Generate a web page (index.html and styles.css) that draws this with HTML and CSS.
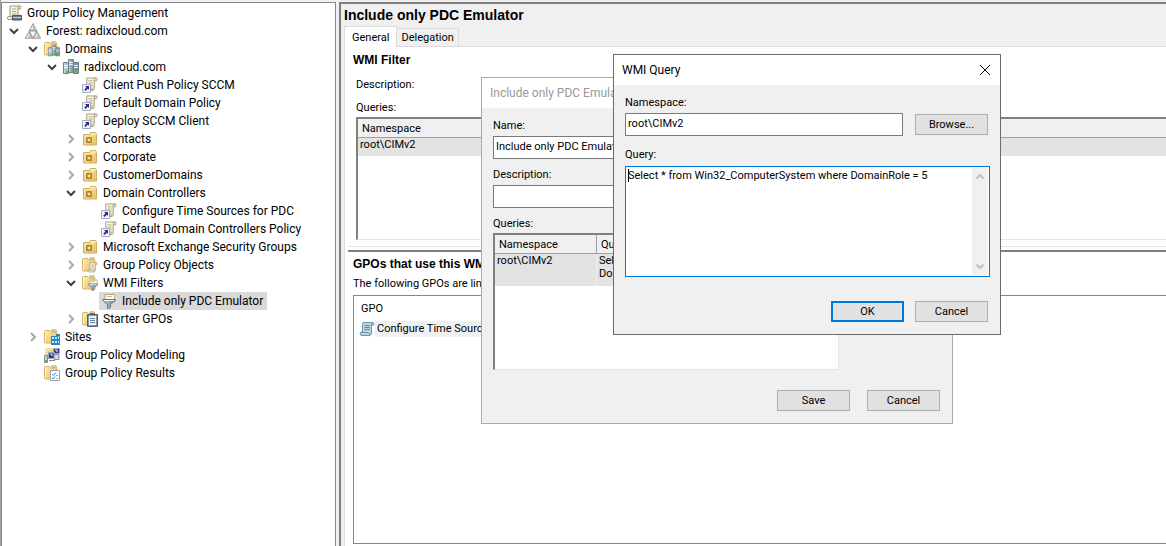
FILE: index.html
```html
<!DOCTYPE html>
<html lang="en">
<head>
  <meta charset="UTF-8">
  <meta name="viewport" content="width=device-width, initial-scale=1.0">
  <title>Group Policy Management</title>
  <link rel="stylesheet" href="styles.css">
</head>
<body>

  <!-- ICONS -->
  <svg class="icon-defs" aria-hidden="true">
    <defs>
      <linearGradient id="paper" x1="0" y1="0" x2="1" y2="1"><stop offset="0" stop-color="#fffdf0"/><stop offset="1" stop-color="#e3dbb9"/></linearGradient>
      <linearGradient id="gold" x1="0" y1="0" x2="1" y2="1"><stop offset="0" stop-color="#fdebb0"/><stop offset="1" stop-color="#e9bf5b"/></linearGradient>
      <linearGradient id="steel" x1="0" y1="0" x2="1" y2="0"><stop offset="0" stop-color="#c4d3dc"/><stop offset="1" stop-color="#6c8494"/></linearGradient>
    </defs>
    <symbol id="scroll" viewBox="0 0 16 16">
      <path d="M4 1h10.500q1 1 0 3H12v8q0 2-1.500 2.500H2q-1.500-1.500 0-3h2z" fill="url(#paper)" stroke="#a39b80"/>
      <path d="M12 4V2q.5-1 2-1M2 11.500h7q1 1 1 3" fill="none" stroke="#a39b80"/>
      <path d="M6 4h4M6 6.500h4M6 9h4" stroke="#b9ad84"/>
    </symbol>
    <symbol id="gpm" viewBox="0 0 16 16">
      <use href="#scroll"/>
      <path d="M6.500 10.500h9v4.500h-9z" fill="#66798a" stroke="#475866"/>
      <path d="M9 10V8.500h4V10M7 12.500h8" fill="none" stroke="#c8d1d8"/>
    </symbol>
    <symbol id="forest" viewBox="0 0 16 16">
      <path d="M8 .5L11.700 7.500H4.300zM4 8.300L7.700 15.300H.3zM12 8.300l3.700 7H8.300z" fill="#e4e4e4" stroke="#8a8a8a" stroke-width=".8"/>
      <path d="M4.300 8h7.400L8 15z" fill="#f6f6f6" stroke="#8a8a8a" stroke-width=".8"/>
      <path d="M8 2v5.300h2.800zM4 10v5h2.800zM12 10v5h2.800z" fill="#bcbcbc"/>
    </symbol>
    <symbol id="folder" viewBox="0 0 16 16">
      <path d="M.5 2.500q0-1 1-1h4l1 1.500h5.500q1 0 1 1v10H1.500q-1 0-1-1z" fill="url(#gold)" stroke="#d3b46c"/>
      <path d="M7.500.7H12l.8 1.800H8z" fill="#e8d7a0" stroke="#c9a75a" stroke-width=".7"/>
      <path d="M1.500 3v10" stroke="#fff3c8"/>
    </symbol>
    <symbol id="servers" viewBox="0 0 16 16">
      <path d="M5.500.5h5v13h-5z" fill="url(#steel)" stroke="#6d808d"/>
      <path d="M.5 3.500h5v11h-5zM10.500 3.500h5v11h-5z" fill="url(#steel)" stroke="#6d808d"/>
      <path d="M6 3.500h4M6 5.500h4M1 6.500h4M1 8.500h4M11 6.500h4M11 8.500h4" stroke="#edf3f6"/>
      <path d="M3 12h2v2H3zM13 12h2v2h-2zM8 10h2v2H8z" fill="#52cf28"/>
    </symbol>
    <symbol id="domains" viewBox="0 0 16 16">
      <use href="#folder"/>
      <use href="#servers" x="4" y="4" width="12" height="12"/>
    </symbol>
    <symbol id="link" viewBox="0 0 16 16">
      <use href="#scroll" x="1" y="0" width="15" height="15"/>
      <path d="M.5 7.500h8v8h-8z" fill="#f4f5fb" stroke="#a7a9b8"/>
      <path d="M3 9h4v4L5.800 11.800 3.500 14 2.200 12.700l2.200-2.200z" fill="#292d83"/>
    </symbol>
    <symbol id="ou" viewBox="0 0 16 16">
      <path d="M1.500 3.500h6l1-2h5l1 2v10.500h-13z" fill="url(#gold)" stroke="#cfae5e"/>
      <path d="M9 3h4.500" stroke="#fff"/>
      <path d="M4.500 6.500h5v5h-5z" fill="#c3a142" stroke="#a08434"/>
      <path d="M6 8h2v2H6z" fill="#f4e4a1"/>
    </symbol>
    <symbol id="gpos" viewBox="0 0 16 16">
      <use href="#folder"/>
      <use href="#scroll" x="5" y="5" width="11" height="11"/>
    </symbol>
    <symbol id="funnel" viewBox="0 0 16 16">
      <path d="M4 1.500h9.500q1 1 0 2V7H4z" fill="#fffdf0" stroke="#b1a57d"/>
      <path d="M6 3.500h5" stroke="#c9bc93"/>
      <path d="M1.500 6.500h13q0 2-5 4.500v3.500l-3 1V11q-5-2.500-5-4.500z" fill="url(#steel)" stroke="#647f92"/>
      <path d="M3 7.500h10" stroke="#eff6fa"/>
    </symbol>
    <symbol id="wmi" viewBox="0 0 16 16">
      <use href="#folder"/>
      <use href="#funnel" x="5" y="4" width="12" height="12"/>
    </symbol>
    <symbol id="starter" viewBox="0 0 16 16">
      <use href="#folder"/>
      <path d="M5.500 3.500h10v12h-10z" fill="#7f98ad" stroke="#4c6478"/>
      <path d="M7 5h7v9H7z" fill="#eef3f7"/>
      <path d="M8 7.500h5M8 9.500h5M8 11.500h5" stroke="#6886a4"/>
      <path d="M8 2.500h5" stroke="#a35a48"/>
    </symbol>
    <symbol id="sites" viewBox="0 0 16 16">
      <use href="#folder"/>
      <path d="M7 7h5V5h4v11H7z" fill="#2389cf"/>
      <path d="M8 8h2v2H8zM11 8h2v2h-2zM14 7h1v3h-1zM8 12h2v2H8zM11 12h2v2h-2zM14 12h1v2h-1z" fill="#b9e9fc"/>
    </symbol>
    <symbol id="modeling" viewBox="0 0 16 16">
      <path d="M1 1h10v10H1z" fill="url(#gold)"/>
      <path d="M9.500 1.500h6v5h-6zM4.500 5.500h6v6h-6z" fill="#2d3aa5" stroke="#a2a8b0"/>
      <path d="M10 7.500h5v5h-5z" fill="#d3d8dd" stroke="#8b929a"/>
      <path d="M.5 8.500h3v7h-3z" fill="#c9cfd3" stroke="#878e93"/>
      <path d="M11 3h2v2M6 7h2v2" fill="none" stroke="#e8edff"/>
      <path d="M5 13.500h6" stroke="#888"/>
      <path d="M1 13h2v2H1z" fill="#55b735"/>
    </symbol>
    <symbol id="results" viewBox="0 0 16 16">
      <use href="#folder"/>
      <path d="M6.500 5.500h9v10h-9z" fill="#fff" stroke="#98a0a5"/>
      <path d="M8 9l1.500 1.500L12 7.500M8 13l1 1 2-2.500" fill="none" stroke="#2d7fba"/>
      <path d="M12 10.500h2M12 13.500h2" stroke="#a2aeb7"/>
    </symbol>
    <symbol id="gpo" viewBox="0 0 16 16">
      <path d="M4 1.500q-1 .5-.5 2V11H2q-2 1.500 0 3.500h8.500q2-.5 2-2.500V4H15q.5-2-1-2.500z" fill="#bcd4df" stroke="#6f98aa"/>
      <path d="M12.500 4q-.5-2 1.500-2.500M2 11.500h7.500q1.500 1 1 3" fill="none" stroke="#6f98aa"/>
      <path d="M5.500 4.500H11M5.500 6.500H11M5.500 8.500H11" stroke="#648ba5"/>
    </symbol>
    <symbol id="open" viewBox="0 0 10 10"><path d="M1 3l4 4 4-4" fill="none" stroke="#404040" stroke-width="2"/></symbol>
    <symbol id="closed" viewBox="0 0 10 10"><path d="M3 1l4 4-4 4" fill="none" stroke="#a6a6a6" stroke-width="2"/></symbol>
  </svg>

  <!-- TREE -->
  <nav class="tree" aria-label="Console tree">
    <div class="row"><a href="#" class="node"><svg class="icon"><use href="#gpm"/></svg>Group Policy Management</a></div>
    <ul>
      <li>
        <div class="row"><button class="toggle" aria-label="Collapse"><svg><use href="#open"/></svg></button><a href="#" class="node"><svg class="icon"><use href="#forest"/></svg>Forest: radixcloud.com</a></div>
        <ul>
          <li>
            <div class="row"><button class="toggle" aria-label="Collapse"><svg><use href="#open"/></svg></button><a href="#" class="node"><svg class="icon"><use href="#domains"/></svg>Domains</a></div>
            <ul>
              <li>
                <div class="row"><button class="toggle" aria-label="Collapse"><svg><use href="#open"/></svg></button><a href="#" class="node"><svg class="icon"><use href="#servers"/></svg>radixcloud.com</a></div>
                <ul>
                  <li class="row leaf"><a href="#" class="node"><svg class="icon"><use href="#link"/></svg>Client Push Policy SCCM</a></li>
                  <li class="row leaf"><a href="#" class="node"><svg class="icon"><use href="#link"/></svg>Default Domain Policy</a></li>
                  <li class="row leaf"><a href="#" class="node"><svg class="icon"><use href="#link"/></svg>Deploy SCCM Client</a></li>
                  <li class="row"><button class="toggle" aria-label="Expand"><svg><use href="#closed"/></svg></button><a href="#" class="node"><svg class="icon"><use href="#ou"/></svg>Contacts</a></li>
                  <li class="row"><button class="toggle" aria-label="Expand"><svg><use href="#closed"/></svg></button><a href="#" class="node"><svg class="icon"><use href="#ou"/></svg>Corporate</a></li>
                  <li class="row"><button class="toggle" aria-label="Expand"><svg><use href="#closed"/></svg></button><a href="#" class="node"><svg class="icon"><use href="#ou"/></svg>CustomerDomains</a></li>
                  <li>
                    <div class="row"><button class="toggle" aria-label="Collapse"><svg><use href="#open"/></svg></button><a href="#" class="node"><svg class="icon"><use href="#ou"/></svg>Domain Controllers</a></div>
                    <ul>
                      <li class="row leaf"><a href="#" class="node"><svg class="icon"><use href="#link"/></svg>Configure Time Sources for PDC</a></li>
                      <li class="row leaf"><a href="#" class="node"><svg class="icon"><use href="#link"/></svg>Default Domain Controllers Policy</a></li>
                    </ul>
                  </li>
                  <li class="row"><button class="toggle" aria-label="Expand"><svg><use href="#closed"/></svg></button><a href="#" class="node"><svg class="icon"><use href="#ou"/></svg>Microsoft Exchange Security Groups</a></li>
                  <li class="row"><button class="toggle" aria-label="Expand"><svg><use href="#closed"/></svg></button><a href="#" class="node"><svg class="icon"><use href="#gpos"/></svg>Group Policy Objects</a></li>
                  <li>
                    <div class="row"><button class="toggle" aria-label="Collapse"><svg><use href="#open"/></svg></button><a href="#" class="node"><svg class="icon"><use href="#wmi"/></svg>WMI Filters</a></div>
                    <ul>
                      <li class="row leaf"><a href="#" class="node selected"><svg class="icon"><use href="#funnel"/></svg>Include only PDC Emulator</a></li>
                    </ul>
                  </li>
                  <li class="row"><button class="toggle" aria-label="Expand"><svg><use href="#closed"/></svg></button><a href="#" class="node"><svg class="icon"><use href="#starter"/></svg>Starter GPOs</a></li>
                </ul>
              </li>
            </ul>
          </li>
          <li class="row"><button class="toggle" aria-label="Expand"><svg><use href="#closed"/></svg></button><a href="#" class="node"><svg class="icon"><use href="#sites"/></svg>Sites</a></li>
          <li class="row leaf"><a href="#" class="node"><svg class="icon"><use href="#modeling"/></svg>Group Policy Modeling</a></li>
          <li class="row leaf"><a href="#" class="node"><svg class="icon"><use href="#results"/></svg>Group Policy Results</a></li>
        </ul>
      </li>
    </ul>
  </nav>

  <!-- DETAILS -->
  <main class="details">
    <h1>Include only PDC Emulator</h1>
    <div class="tabs" role="tablist">
      <button class="tab active" role="tab" aria-selected="true">General</button>
      <button class="tab" role="tab" aria-selected="false">Delegation</button>
    </div>
    <div class="tab-panel">
      <section class="filter">
        <h2>WMI Filter</h2>
        <p class="field-name">Description:</p>
        <p class="field-name">Queries:</p>
        <div class="list">
          <table>
            <thead><tr><th>Namespace</th></tr></thead>
            <tbody><tr><td>root\CIMv2</td></tr></tbody>
          </table>
        </div>
      </section>
      <section class="gpos">
        <h2>GPOs that use this WMI filter</h2>
        <p>The following GPOs are linked to this WMI filter:</p>
        <div class="gpo-list">
          <div class="gpo-head">GPO</div>
          <a href="#" class="gpo-item"><svg class="icon"><use href="#gpo"/></svg><span>Configure Time Sources for PDC</span></a>
        </div>
      </section>
    </div>
  </main>

  <!-- FILTER DIALOG -->
  <form class="dialog filter-dialog">
    <header>Include only PDC Emulator</header>
    <div class="dialog-body">
      <label for="name">Name:</label>
      <input type="text" id="name" value="Include only PDC Emulator">
      <label for="description">Description:</label>
      <input type="text" id="description">
      <p>Queries:</p>
      <div class="list">
        <table>
          <thead><tr><th class="col-ns">Namespace</th><th>Query</th></tr></thead>
          <tbody><tr><td>root\CIMv2</td><td>Select * from Win32_ComputerSystem where<br>DomainRole = 5</td></tr></tbody>
        </table>
      </div>
      <div class="buttons">
        <button type="button">Save</button>
        <button type="button">Cancel</button>
      </div>
    </div>
  </form>

  <!-- QUERY DIALOG -->
  <form class="dialog query-dialog">
    <header>WMI Query
      <button type="button" class="close" aria-label="Close"><svg viewBox="0 0 10 10"><path d="M0 0l10 10M10 0L0 10" stroke="#000" fill="none"/></svg></button>
    </header>
    <div class="dialog-body">
      <label for="namespace">Namespace:</label>
      <div class="namespace-row">
        <input type="text" id="namespace" value="root\CIMv2">
        <button type="button">Browse...</button>
      </div>
      <label for="query">Query:</label>
      <div class="query-box">
        <textarea id="query" spellcheck="false">Select * from Win32_ComputerSystem where DomainRole = 5</textarea>
        <div class="scrollbar">
          <svg viewBox="0 0 10 10"><path d="M1.500 6.500L5 3l3.500 3.500" fill="none" stroke="#bfbfbf" stroke-width="2"/></svg>
          <svg viewBox="0 0 10 10"><path d="M1.500 3.500L5 7l3.500-3.500" fill="none" stroke="#bfbfbf" stroke-width="2"/></svg>
        </div>
      </div>
      <div class="buttons">
        <button type="button" class="default">OK</button>
        <button type="button">Cancel</button>
      </div>
    </div>
  </form>

</body>
</html>
```
FILE: styles.css
```css
/* === GENERAL === */
* { margin: 0; padding: 0; box-sizing: border-box; }
body {
  display: flex; height: 100vh; overflow: hidden; padding-top: 2px;
  background-color: #f0f0f0; border-left: 1px solid #a0a0a0; color: #000;
  font-family: Roboto, Arial, sans-serif; font-size: 11px; line-height: 13px;
}
ul { list-style: none; }
a { color: inherit; text-decoration: none; }
button, input, textarea { font: inherit; color: inherit; }
table { width: 100%; border-collapse: separate; border-spacing: 0; }
.icon-defs { position: absolute; width: 0; height: 0; }
.icon { width: 16px; height: 16px; flex: none; }

/* === TREE === */
.tree {
  width: 335px; flex: none; padding: 1px 4px; background-color: #fff;
  border: 1px solid #828790; border-bottom: none;
  font-family: Roboto, "Segoe UI", sans-serif; font-size: 12px; line-height: 18px;
}
.tree ul ul { padding-left: 19px; }
.row { display: flex; height: 18px; white-space: nowrap; }
.leaf { padding-left: 17px; }
.toggle { display: flex; align-items: center; justify-content: center; width: 17px; padding-right: 2px; border: none; background: none; }
.toggle svg { width: 10px; height: 10px; }
.node { display: flex; align-items: center; gap: 5px; padding: 0 4px 0 2px; }
.selected { background-color: #d9d9d9; }
.tree > .row .node { padding-left: 0; }

/* === DETAILS === */
.details {
  flex: 1; min-width: 0; display: flex; flex-direction: column; margin-left: 3px;
  border-left: 2px solid #808080; border-top: 2px solid #808080; padding-left: 3px;
}
h1, h2 { font-family: "Liberation Sans", Arial, sans-serif; }
h1 { font-size: 14px; line-height: 22px; }
h2 { font-size: 12px; line-height: 16px; }
.tabs { display: flex; align-items: flex-end; height: 20px; }
.tab { height: 18px; padding: 0 4px; border: 1px solid #dcdcdc; border-left: none; border-bottom: none; background: #f0f0f0; }
.tab.active { height: 21px; padding: 0 7px; border-left: 1px solid #dcdcdc; background: #fff; margin-bottom: -1px; z-index: 1; }
.tab-panel {
  flex: 1; display: flex; flex-direction: column; background-color: #fff;
  border: solid #dcdcdc; border-width: 1px 0 0 1px; padding-left: 3px;
}
.filter { display: flex; flex-direction: column; height: 200px; padding: 5px 0 6px 5px; border-bottom: 1px solid #e3e3e3; }
.filter .list { flex: 1; margin: 2px 0 0 3px; border-right: none; }
.field-name { margin: 9px 0 1px 3px; }
h2 + .field-name { margin-top: 10px; }
.list { background-color: #fff; border: 1px solid #e3e3e3; border-top: 2px solid #808080; border-left: 2px solid #808080; }
.list th { height: 19px; padding-left: 4px; background-color: #f0f0f0; border-bottom: 1px solid #a0a0a0; font-weight: normal; text-align: left; }
.list td { height: 18px; padding: 0 2px 3px; background-color: #e3e3e3; vertical-align: top; }
.gpos { flex: 1; display: flex; flex-direction: column; margin-top: 3px; padding: 4px 0 2px 5px; border-top: 2px solid #808080; }
.gpos p { margin: 5px 0; }
.gpo-list { flex: 1; border: 1px solid #828790; border-right: none; padding: 5px; }
.gpo-head { padding-left: 2px; line-height: 16px; }
.gpo-item { display: flex; margin-top: 4px; line-height: 16px; }
.gpo-item span { padding: 0 2px; background-color: #f0f0f0; }

/* === DIALOGS === */
.dialog { position: absolute; display: flex; flex-direction: column; background-color: #f0f0f0; border: 1px solid #aaa; }
.dialog header {
  display: flex; justify-content: space-between; align-items: center; height: 30px; padding-left: 8px;
  background-color: #fff; font-size: 12px;
}
.dialog-body { display: flex; flex-direction: column; padding: 11px 12px 12px 11px; }
.dialog input { height: 23px; padding: 0 2px 2px; border: 1px solid #7a7a7a; background-color: #fff; outline: none; }
.dialog .buttons { display: flex; justify-content: flex-end; }
.dialog .buttons button, .namespace-row button { width: 73px; height: 21px; background-color: #e1e1e1; border: 1px solid #adadad; }
.dialog .buttons .default { border: 2px solid #0078d7; }

.filter-dialog { left: 481px; top: 77px; width: 472px; }
.filter-dialog header { color: #999; }
.filter-dialog input { width: 346px; margin: 4px 0 9px; }
.filter-dialog .list { width: 346px; height: 137px; margin: 3px 0 20px; }
.filter-dialog .list td { height: 32px; border-right: 1px solid #f0f0f0; }
.filter-dialog .col-ns { width: 102px; border-right: 1px solid #a0a0a0; }
.filter-dialog .buttons { gap: 17px; }

.query-dialog { left: 613px; top: 54px; width: 388px; border-color: #6b6b6b; }
.query-dialog .dialog-body { padding-right: 10px; }
.close { display: flex; padding: 10px; background: none; border: none; }
.close svg { width: 10px; height: 10px; }
.namespace-row { display: flex; align-items: center; gap: 12px; margin: 4px 0 12px; }
.namespace-row input { flex: 1; min-width: 0; }
.query-dialog .namespace-row, .query-dialog .buttons { padding-right: 2px; }
.query-box { position: relative; display: flex; height: 111px; margin: 5px 0 24px; padding: 1px; background-color: #fff; border: 1px solid #0078d7; }
.query-box::before { content: ''; position: absolute; left: 2px; top: 2px; width: 1px; height: 13px; background-color: #000; }
.query-box textarea { flex: 1; padding: 1px; border: none; outline: none; resize: none; background: none; }
.scrollbar { display: flex; flex-direction: column; justify-content: space-between; align-items: center; width: 16px; padding: 4px 0; background-color: #f0f0f0; }
.scrollbar svg { width: 10px; height: 10px; }
.query-dialog .buttons { gap: 11px; }
```
